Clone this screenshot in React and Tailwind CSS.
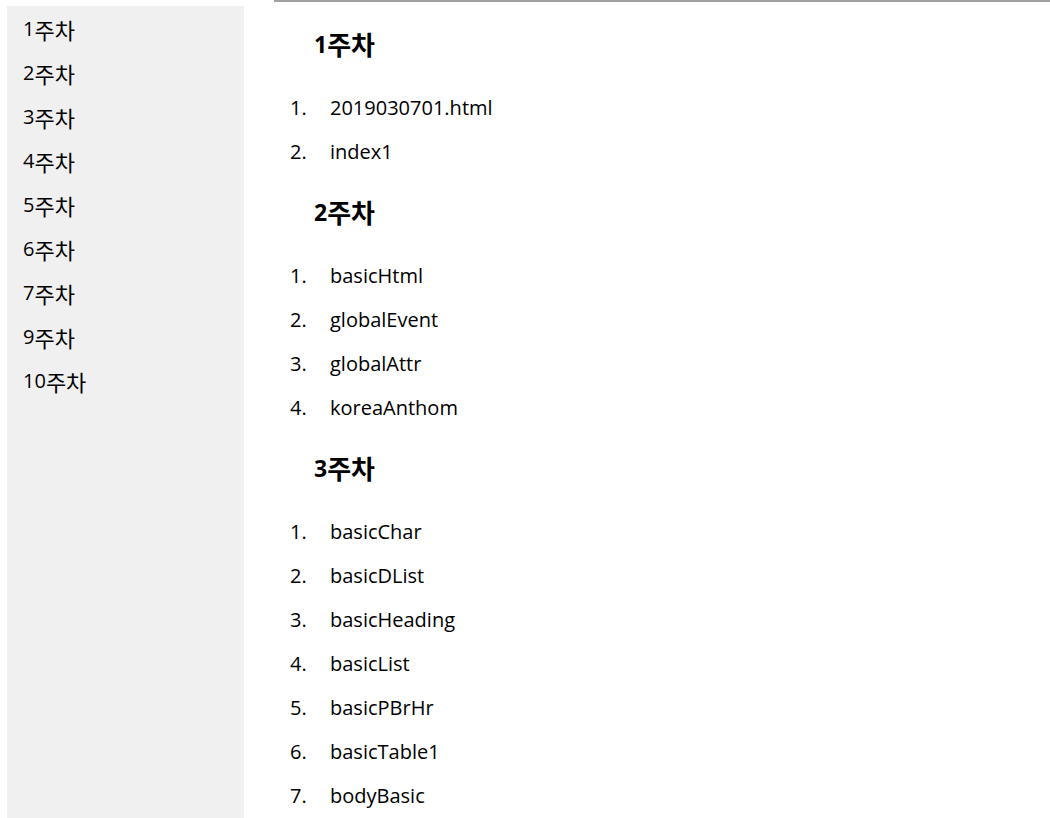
import React from "react";

const weeks = ["1주차", "2주차", "3주차", "4주차", "5주차", "6주차", "7주차", "9주차", "10주차"];

const sections = [
  { title: "1주차", items: ["2019030701.html", "index1"] },
  { title: "2주차", items: ["basicHtml", "globalEvent", "globalAttr", "koreaAnthom"] },
  {
    title: "3주차",
    items: ["basicChar", "basicDList", "basicHeading", "basicList", "basicPBrHr", "basicTable1", "bodyBasic"],
  },
];

const base = { fontFamily: '"Open Sans", "Noto Sans CJK KR", sans-serif' };
const krFont = { fontFamily: '"Noto Sans CJK KR", sans-serif' };

function Kr({ text, big }) {
  const m = text.match(/^(\d+)(.*)$/);
  return (
    <>
      <span>{m[1]}</span>
      <span className={big ? "text-[26px]" : "text-[22px]"} style={krFont}>
        {m[2]}
      </span>
    </>
  );
}

export default function App() {
  return (
    <div className="flex h-[818px] w-[1050px] overflow-hidden bg-white text-black" style={base}>
      <aside className="ml-[7px] mt-[6px] w-[237px] shrink-0 bg-[#f0f0f0] pt-[1px] pl-[16px]">
        {weeks.map((w) => (
          <div key={w} className="flex h-[44px] items-center text-[20px] leading-none">
            <Kr text={w} />
          </div>
        ))}
      </aside>
      <main className="ml-[30px] flex-1 border-t-2 border-[#a0a0a0]">
        <div className="pt-[20px]">
          {sections.map((s) => (
            <section key={s.title} className="mb-[16px]">
              <h2 className="flex h-[44px] items-center pl-[40px] text-[23px] font-bold leading-none">
                <Kr text={s.title} big />
              </h2>
              <ol className="mt-[20px]">
                {s.items.map((it, i) => (
                  <li key={it} className="flex h-[44px] items-center text-[20px]">
                    <span className="w-[56px] pl-[16px]">{i + 1}.</span>
                    <span>{it}</span>
                  </li>
                ))}
              </ol>
            </section>
          ))}
        </div>
      </main>
    </div>
  );
}
